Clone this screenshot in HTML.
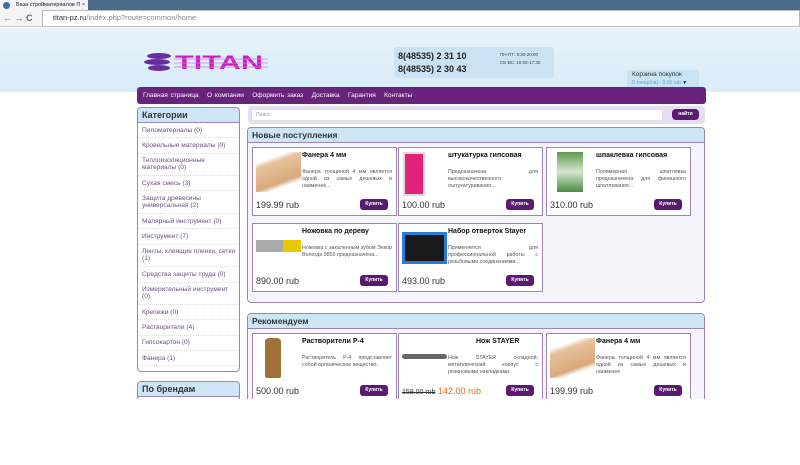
<!DOCTYPE html>
<html><head><meta charset="utf-8"><style>
*{margin:0;padding:0;box-sizing:border-box}
body{width:800px;height:465px;overflow:hidden;background:#fff;font-family:"Liberation Sans",Arial,sans-serif;position:relative;color:#333}
.a{position:absolute}
.card{position:absolute;width:145px;height:69px;border:1px solid #9b86b3;background:#fff}
.card .img{position:absolute;left:3px;top:4px;width:45px;height:40px}
.card .t{position:absolute;left:49px;top:4px;font-size:7px;font-weight:bold;color:#111}
.card .d{position:absolute;left:49px;right:4px;top:21px;font-size:5.3px;line-height:6.8px;color:#555;text-align:justify}
.card .p{position:absolute;left:3px;top:52px;font-size:9px;color:#333}
.card .b{position:absolute;right:8px;top:51px;width:28px;height:11px;background:#5b1a72;border-radius:3px;color:#fff;font-size:5px;font-weight:bold;text-align:center;line-height:11px}
.panel{position:absolute;left:247px;width:458px;border:1px solid #9b86b3;border-radius:4px;background:#f6f4fb}
.ph{height:15px;background:#cde6f6;border-bottom:1px solid #9b86b3;font-size:8.5px;font-weight:bold;color:#333;padding:2px 4px;border-radius:3px 3px 0 0}
.cat{font-size:6.6px;color:#6b4f80;border-bottom:1px dotted #ddd;padding:3.5px 4px;line-height:7.3px}
</style></head><body>
<div class="a" style="left:0;top:0;width:800px;height:10px;background:#4b6a8c"></div>
<div class="a" style="left:0;top:0;width:88px;height:10px;background:#f2f4f7;font-size:5.5px;line-height:10px;padding-left:16px;color:#222">База стройматериалов П ×</div>
<div class="a" style="left:3px;top:2px;width:7px;height:7px;border-radius:50%;background:#3e6ea6"></div>
<div class="a" style="left:0;top:10px;width:800px;height:17px;background:#f4f4f4;border-bottom:1px solid #ccc"></div>
<div class="a" style="left:3px;top:13px;font-size:9px;color:#666">← → <b>C</b></div>
<div class="a" style="left:42px;top:10px;height:17px;width:758px;background:#fff;border:1px solid #bbb"></div>
<div class="a" style="left:53px;top:13px;font-size:7.5px;color:#333">titan-pz.ru<span style="color:#888">/index.php?route=common/home</span></div>
<div class="a" style="left:0;top:28px;width:800px;height:64px;background:linear-gradient(#e6f3fb,#d8ecf8)"></div>
<svg class="a" style="left:144px;top:50px" width="125" height="26" viewBox="0 0 125 26"><g fill="#6a2d9e"><ellipse cx="15" cy="6" rx="12" ry="3"/><ellipse cx="13" cy="12" rx="13" ry="3"/><ellipse cx="15" cy="18" rx="11" ry="3"/></g><text x="31" y="19" font-family="Liberation Sans" font-weight="bold" font-size="19" fill="#c41fc0" textLength="88" lengthAdjust="spacingAndGlyphs">TITAN</text><g stroke="#e070e0" stroke-width="0.8"><line x1="30" y1="9" x2="124" y2="9"/><line x1="30" y1="13" x2="124" y2="13"/><line x1="30" y1="17" x2="124" y2="17"/></g></svg>
<div class="a" style="left:394px;top:47px;width:160px;height:31px;background:#c9e3f4;border-radius:3px"></div>
<div class="a" style="left:398px;top:50px;font-size:9px;font-weight:bold;line-height:13px;color:#222">8(48535) 2 31 10<br>8(48535) 2 30 43</div>
<div class="a" style="left:500px;top:51px;font-size:4.5px;line-height:8px;color:#444">ПН-ПТ: 9:30-20:00<br>СБ-ВС: 10:00-17:30</div>
<div class="a" style="left:627px;top:70px;width:72px;height:18px;background:#c9e3f4;border-radius:2px"></div>
<div class="a" style="left:632px;top:71px;font-size:6.5px;color:#333">Корзина покупок</div>
<div class="a" style="left:632px;top:80px;font-size:5px;color:#5aa9e0">0 товар(ов) - 0.00 rub <span style="color:#222">▼</span></div>
<div class="a" style="left:137px;top:87px;width:569px;height:17px;background:#6a237c;border-radius:3px;font-size:6.5px;color:#fff;line-height:17px;padding-left:6px;word-spacing:1px">Главная страница &nbsp; О компании &nbsp; Оформить заказ &nbsp; Доставка &nbsp; Гарантия &nbsp; Контакты</div>
<div class="a" style="left:137px;top:107px;width:103px;height:265px;border:1px solid #9b86b3;border-radius:4px;background:#fff;overflow:hidden">
<div class="ph" style="font-size:9px">Категории</div>
<div class="cat">Пиломатериалы (0)</div><div class="cat">Кровельные материалы (0)</div><div class="cat">Теплоизоляционные материалы (0)</div><div class="cat">Сухая смесь (3)</div><div class="cat">Защита древесины универсальная (2)</div><div class="cat">Малярный инструмент (0)</div><div class="cat">Инструмент (7)</div><div class="cat">Ленты, клеящие пленки, сетки (1)</div><div class="cat">Средства защиты труда (0)</div><div class="cat">Измерительный инструмент (0)</div><div class="cat">Крепежи (0)</div><div class="cat">Растворители (4)</div><div class="cat">Гипсокартон (0)</div><div class="cat">Фанера (1)</div></div>
<div class="a" style="left:137px;top:381px;width:103px;height:20px;border:1px solid #9b86b3;border-radius:4px;background:#fff;overflow:hidden"><div class="ph" style="font-size:9px">По брендам</div></div>
<div class="a" style="left:248px;top:106px;width:457px;height:18px;background:#e5def4;border-radius:4px"></div>
<div class="a" style="left:251px;top:109px;width:412px;height:12px;background:#fff;border:1px solid #ddd;border-radius:3px;font-size:5px;color:#999;padding:2px 4px">Поиск</div>
<div class="a" style="left:672px;top:109px;width:27px;height:11px;background:#5b1a72;border-radius:4px;color:#fff;font-size:5px;font-weight:bold;text-align:center;line-height:11px">найти</div>
<div class="panel" style="top:127px;height:176px"><div class="ph">Новые поступления</div></div>
<div class="card" style="left:252px;top:147px"><div class="img" style="background:linear-gradient(160deg,#fff 20%,#e7c29c 30%,#d9a97c 70%,#fff 80%)"></div><div class="t">Фанера 4 мм</div><div class="d">Фанера толщиной 4 мм является одной из самых дешевых и наименее...</div><div class="p">199.99 rub</div><div class="b">Купить</div></div>
<div class="card" style="left:398px;top:147px"><div class="img" style="left:4px;width:22px;height:44px;background:#e0227a;border:2px solid #ddd"></div><div class="t">штукатурка гипсовая</div><div class="d">Предназначена для высококачественного оштукатуривания...</div><div class="p">100.00 rub</div><div class="b">Купить</div></div>
<div class="card" style="left:546px;top:147px"><div class="img" style="left:10px;width:26px;height:40px;background:linear-gradient(#5c9a4e,#d6e6d0 50%,#4a8b40)"></div><div class="t">шпаклевка гипсовая</div><div class="d">Полимерная шпатлевка предназначена для финишного шпатлевания...</div><div class="p">310.00 rub</div><div class="b">Купить</div></div>
<div class="card" style="left:252px;top:223px"><div class="img" style="top:16px;height:12px;background:linear-gradient(90deg,#aaa 60%,#e8c800 60%)"></div><div class="t">Ножовка по дереву</div><div class="d">Ножовка с закаленным зубом Энкор Вологда 9859 предназначена...</div><div class="p">890.00 rub</div><div class="b">Купить</div></div>
<div class="card" style="left:398px;top:223px"><div class="img" style="top:8px;height:32px;background:#1a1a1a;border:3px solid #2b7bd6"></div><div class="t">Набор отверток Stayer</div><div class="d">Применяется для профессиональной работы с резьбовыми соединениями...</div><div class="p">493.00 rub</div><div class="b">Купить</div></div>
<div class="panel" style="top:313px;height:100px"><div class="ph">Рекомендуем</div></div>
<div class="card" style="left:252px;top:333px"><div class="img" style="left:12px;width:16px;height:40px;background:#a0723a;border-radius:4px 4px 2px 2px"></div><div class="t">Растворители Р-4</div><div class="d">Растворитель Р-4 представляет собой органическое вещество.</div><div class="p">500.00 rub</div><div class="b">Купить</div></div>
<div class="card" style="left:398px;top:333px"><div class="img" style="top:20px;height:5px;background:#666;border-radius:3px"></div><div class="t" style="left:77px">Нож STAYER</div><div class="d">Нож STAYER складной, металлический корпус с резиновыми накладками.</div><div class="p"><s style="font-size:7px">159.00 rub</s> <span style="color:#e46a1a">142.00 rub</span></div><div class="b">Купить</div></div>
<div class="card" style="left:546px;top:333px"><div class="img" style="background:linear-gradient(160deg,#fff 20%,#e7c29c 30%,#d9a97c 70%,#fff 80%)"></div><div class="t">Фанера 4 мм</div><div class="d">Фанера толщиной 4 мм является одной из самых дешевых и наименее</div><div class="p">199.99 rub</div><div class="b">Купить</div></div>
<div class="a" style="left:0;top:399px;width:800px;height:66px;background:#fff"></div>
</body></html>
